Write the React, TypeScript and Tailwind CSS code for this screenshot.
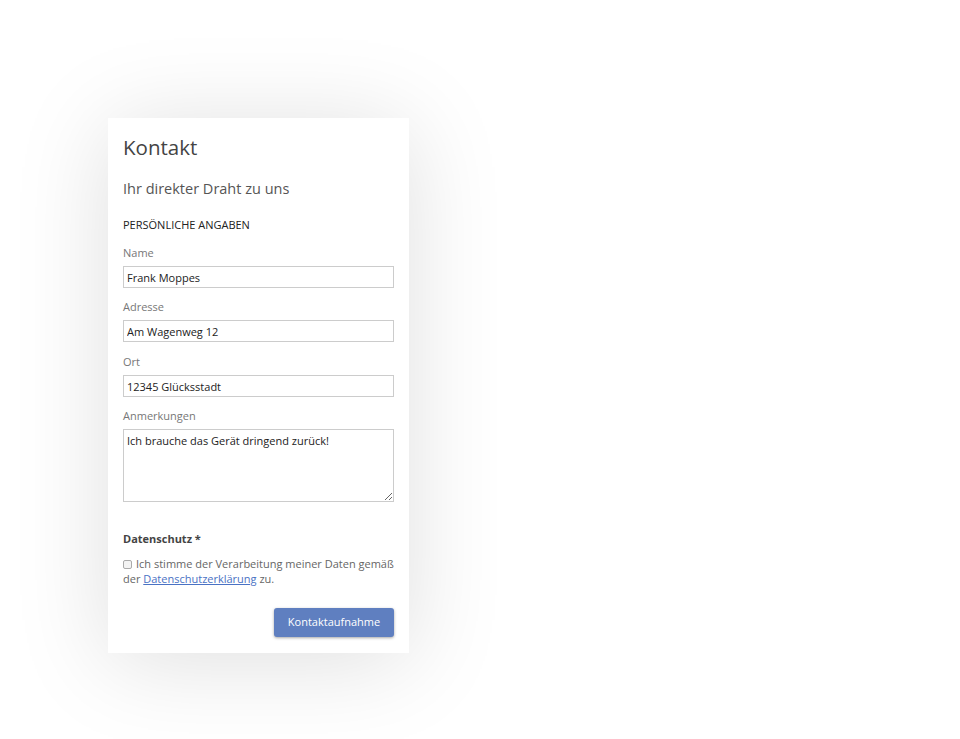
import { useState } from 'react';

const fields = [
    { key: 'name', label: 'Name', gap: '' },
    { key: 'address', label: 'Adresse', gap: 'mt-[11px]' },
    { key: 'city', label: 'Ort', gap: 'mt-[12px]' },
];

const App = () => {
    const [form, setForm] = useState<Record<string, string>>({
        name: 'Frank Moppes',
        address: 'Am Wagenweg 12',
        city: '12345 Glücksstadt',
        notes: 'Ich brauche das Gerät dringend zurück!',
    });
    const [consent, setConsent] = useState(false);

    return (
        <div className="min-h-screen bg-white pt-[118px] pl-[108px] font-['Open_Sans',sans-serif]">
            <div className="w-[301px] bg-white px-[15px] pt-[16px] pb-[16px] shadow-[0_8px_90px_rgba(0,0,0,0.13)]">
                <h1 className="text-[20.5px] leading-[26px] text-[#444]">Kontakt</h1>
                <h2 className="mt-[20px] text-[14.5px] leading-[18px] text-[#555]">Ihr direkter Draht zu uns</h2>
                <h3 className="mt-[19px] text-[11px] leading-[15px] text-[#222] uppercase">Persönliche Angaben</h3>

                <form onSubmit={(e) => e.preventDefault()} className="mt-[13px]">
                    {fields.map((f) => (
                        <div key={f.key} className={f.gap}>
                            <label className="block text-[11px] leading-[15px] text-[#777] mb-[6px]">{f.label}</label>
                            <input
                                type="text"
                                value={form[f.key]}
                                onChange={(e) => setForm({ ...form, [f.key]: e.target.value })}
                                className="block w-full h-[22px] px-[3px] border border-[#ccc] text-[11px] text-[#222] outline-none"
                            />
                        </div>
                    ))}
                    <div className="mt-[11px]">
                        <label className="block text-[11px] leading-[15px] text-[#777] mb-[6px]">Anmerkungen</label>
                        <textarea
                            value={form.notes}
                            onChange={(e) => setForm({ ...form, notes: e.target.value })}
                            className="block w-full h-[73px] px-[3px] py-[3px] border border-[#ccc] text-[11px] leading-[15px] text-[#222] outline-none"
                        />
                    </div>

                    <div className="mt-[29px] text-[11px] leading-[15px] font-bold text-[#444]">Datenschutz *</div>
                    <label className="mt-[10px] block text-[11px] leading-[15px] text-[#666]">
                        <span
                            onClick={() => setConsent(!consent)}
                            className="inline-block align-[-1px] w-[9px] h-[9px] mr-[4px] border border-[#aaa] rounded-[2px] bg-[#f3f3f3]"
                        >
                            {consent && <span className="block w-full h-full bg-[#5f7fc0]" />}
                        </span>
                        Ich stimme der Verarbeitung meiner Daten gemäß der{' '}
                        <a href="#" className="text-[#4a72c4] underline">Datenschutzerklärung</a> zu.
                    </label>

                    <div className="mt-[22px] flex justify-end">
                        <button
                            type="submit"
                            className="w-[120px] h-[29px] rounded-[3px] bg-[#5f7fc0] text-[11px] text-white shadow-[0_1px_3px_rgba(0,0,0,0.35)]"
                        >
                            Kontaktaufnahme
                        </button>
                    </div>
                </form>
            </div>
        </div>
    );
};

export default App;
